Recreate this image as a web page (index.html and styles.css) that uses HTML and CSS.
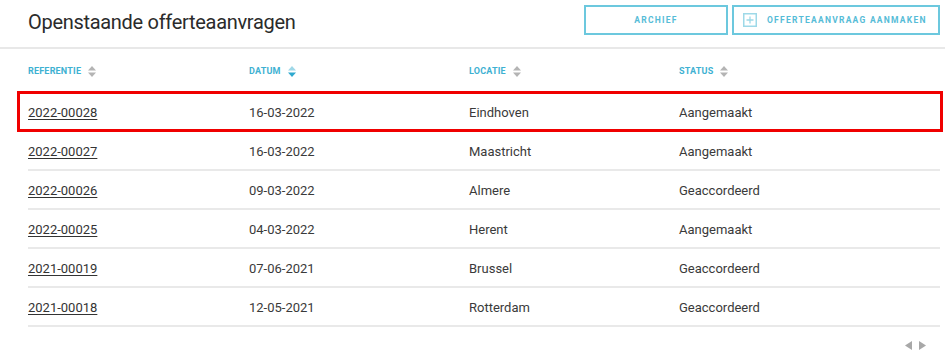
FILE: index.html
```html
<!DOCTYPE html>
<html lang="nl">
<head>
<meta charset="utf-8">
<title>Openstaande offerteaanvragen</title>
<link rel="stylesheet" href="styles.css">
</head>
<body>
<div class="page">
  <header class="header">
    <h1 class="title">Openstaande offerteaanvragen</h1>
    <div class="actions">
      <button class="btn btn-archive">ARCHIEF</button>
      <button class="btn btn-create">
        <svg class="plus" width="14" height="14" viewBox="0 0 14 14"><rect x="0.75" y="0.75" width="12.5" height="12.5" fill="none" stroke="#9ed9e8" stroke-width="1.5"/><path d="M7 3.5v7M3.5 7h7" stroke="#9ed9e8" stroke-width="1.3"/></svg>
        <span>OFFERTEAANVRAAG AANMAKEN</span>
      </button>
    </div>
  </header>

  <div class="table">
    <div class="row head">
      <div class="cell c1">REFERENTIE <svg class="sort" width="8" height="11" viewBox="0 0 8 11"><path d="M4 0L8 4.5H0z" fill="#b4b4b4"/><path d="M4 11L8 6.5H0z" fill="#b4b4b4"/></svg></div>
      <div class="cell c2">DATUM <svg class="sort" width="8" height="11" viewBox="0 0 8 11"><path d="M4 0L8 4.5H0z" fill="#9fd8e8"/><path d="M4 11L8 6.5H0z" fill="#2fa9cf"/></svg></div>
      <div class="cell c3">LOCATIE <svg class="sort" width="8" height="11" viewBox="0 0 8 11"><path d="M4 0L8 4.5H0z" fill="#b4b4b4"/><path d="M4 11L8 6.5H0z" fill="#b4b4b4"/></svg></div>
      <div class="cell c4">STATUS <svg class="sort" width="8" height="11" viewBox="0 0 8 11"><path d="M4 0L8 4.5H0z" fill="#b4b4b4"/><path d="M4 11L8 6.5H0z" fill="#b4b4b4"/></svg></div>
    </div>
    <div class="row body highlighted">
      <div class="cell c1"><a href="#">2022-00028</a></div>
      <div class="cell c2">16-03-2022</div>
      <div class="cell c3">Eindhoven</div>
      <div class="cell c4">Aangemaakt</div>
    </div>
    <div class="row body">
      <div class="cell c1"><a href="#">2022-00027</a></div>
      <div class="cell c2">16-03-2022</div>
      <div class="cell c3">Maastricht</div>
      <div class="cell c4">Aangemaakt</div>
    </div>
    <div class="row body">
      <div class="cell c1"><a href="#">2022-00026</a></div>
      <div class="cell c2">09-03-2022</div>
      <div class="cell c3">Almere</div>
      <div class="cell c4">Geaccordeerd</div>
    </div>
    <div class="row body">
      <div class="cell c1"><a href="#">2022-00025</a></div>
      <div class="cell c2">04-03-2022</div>
      <div class="cell c3">Herent</div>
      <div class="cell c4">Aangemaakt</div>
    </div>
    <div class="row body">
      <div class="cell c1"><a href="#">2021-00019</a></div>
      <div class="cell c2">07-06-2021</div>
      <div class="cell c3">Brussel</div>
      <div class="cell c4">Geaccordeerd</div>
    </div>
    <div class="row body">
      <div class="cell c1"><a href="#">2021-00018</a></div>
      <div class="cell c2">12-05-2021</div>
      <div class="cell c3">Rotterdam</div>
      <div class="cell c4">Geaccordeerd</div>
    </div>
  </div>

  <div class="pager">
    <svg width="8" height="9" viewBox="0 0 8 9"><path d="M7 0V9L0 4.5z" fill="#a8a8a8"/></svg>
    <svg width="8" height="9" viewBox="0 0 8 9"><path d="M0 0V9L7 4.5z" fill="#a8a8a8"/></svg>
  </div>
</div>
</body>
</html>
```

FILE: styles.css
```css
* { box-sizing: border-box; }
html, body { margin: 0; padding: 0; background: #fff; }
body {
  font-family: Roboto, "Liberation Sans", Arial, sans-serif;
  color: #3a3a3a;
}
.page { width: 945px; height: 357px; overflow: hidden; }

.header {
  display: flex;
  justify-content: space-between;
  align-items: flex-start;
  height: 49px;
  padding: 5px 5px 0 28px;
  border-bottom: 2px solid #e8e8e8;
}
.title {
  margin: 5px 0 0;
  font-size: 20px;
  font-weight: 400;
  color: #2b2b2b;
  line-height: 24px;
  letter-spacing: -0.3px;
}
.actions { display: flex; gap: 4px; }
.btn {
  display: flex;
  align-items: center;
  justify-content: center;
  height: 30px;
  background: #fff;
  border: 2px solid #6cc8de;
  color: #56bcd7;
  font-family: Roboto, "Liberation Sans", Arial, sans-serif;
  font-size: 8.5px;
  font-weight: 700;
  letter-spacing: 1.25px;
  padding: 0;
  cursor: pointer;
}
.btn-archive { width: 144px; }
.btn-create { width: 208px; justify-content: flex-start; padding-left: 9px; gap: 10px; }
.plus { display: block; }

.table { margin: 0 5px 0 28px; }
.row { display: flex; align-items: center; }
.row.head {
  height: 44px;
  font-size: 9px;
  font-weight: 700;
  color: #3eb1d2;
  letter-spacing: 0.2px;
}
.row.head .cell { display: flex; align-items: center; gap: 7px; }
.sort { display: block; }
.row.body {
  position: relative;
  height: 39px;
  border-bottom: 2px solid #e9e9e9;
  font-size: 13px;
  padding-top: 1px;
}
.row.highlighted::after {
  content: "";
  position: absolute;
  left: -11px;
  right: -3px;
  top: -2px;
  bottom: -2px;
  border: 3px solid #f00000;
  pointer-events: none;
}
.c1 { width: 221px; }
.c2 { width: 220px; }
.c3 { width: 210px; }
.c4 { flex: 1; }
.cell a { color: #333; text-decoration: underline; text-underline-offset: 2px; }

.pager {
  display: flex;
  justify-content: flex-end;
  gap: 6px;
  margin: 14px 18px 0 0;
}
.pager svg { display: block; }
```
